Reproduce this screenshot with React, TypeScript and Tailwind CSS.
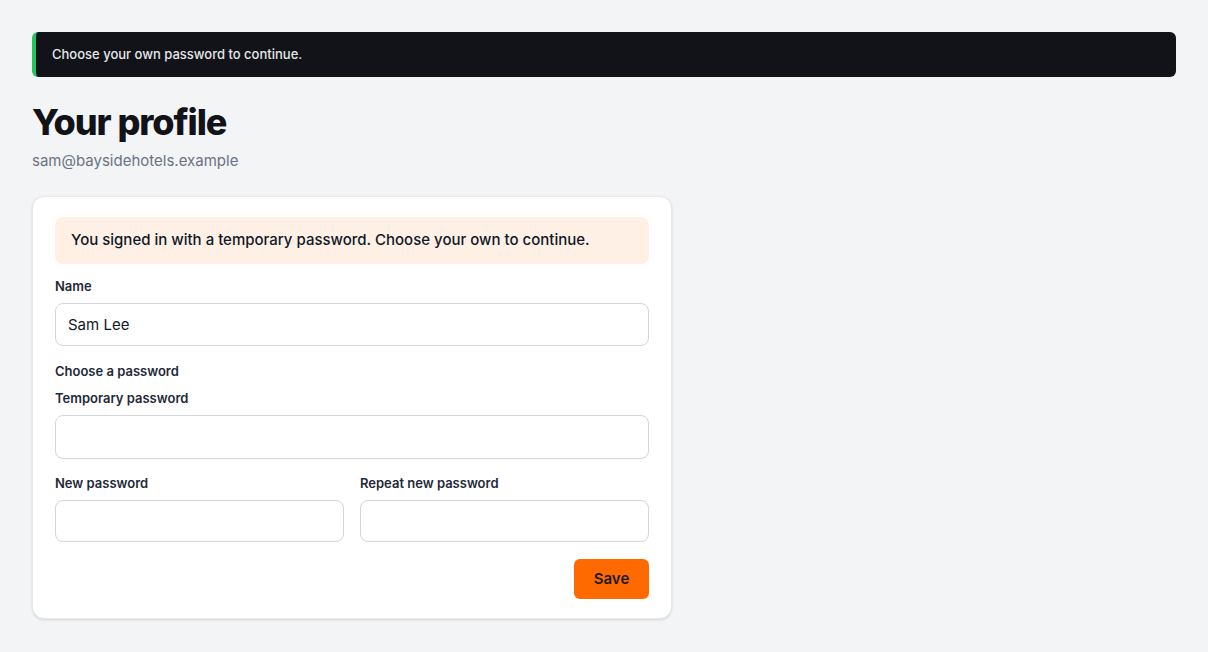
const App = () => {
  return (
    <div className="min-h-screen bg-[#f3f4f6] px-8 pt-8 pb-8 font-['Inter',sans-serif] text-gray-900">
      <div className="flex h-[45px] items-center rounded-md border-l-4 border-[#22c55e] bg-[#111318] pl-4 text-[13px] font-medium text-[#e5e7eb]">
        Choose your own password to continue.
      </div>

      <h1 className="mt-[25px] text-[36px] leading-[40px] font-extrabold tracking-[-0.03em] text-[#111318]">
        Your profile
      </h1>
      <p className="mt-2 text-[15px] leading-[22px] text-gray-500">sam@baysidehotels.example</p>

      <div className="mt-6 w-[640px] rounded-xl border border-gray-200 bg-white px-[22px] pt-5 pb-[19px] shadow-sm">
        <div className="flex h-[47px] items-center rounded-lg bg-[#fff0e6] px-4 text-[15px] font-medium text-gray-900">
          You signed in with a temporary password. Choose your own to continue.
        </div>

        <form className="mt-[13px] flex flex-col" onSubmit={(e) => e.preventDefault()}>
          <label className="mb-2 block text-[13px] leading-[18px] font-semibold text-gray-800">Name</label>
          <input
            type="text"
            defaultValue="Sam Lee"
            className="h-[43px] w-full rounded-lg border border-gray-300 px-3 text-[15px] text-gray-900 outline-none"
          />

          <div className="mt-4 text-[13px] leading-[18px] font-semibold text-gray-800">Choose a password</div>
          <label className="mt-[9px] mb-2 block text-[13px] leading-[18px] font-semibold text-gray-800">
            Temporary password
          </label>
          <input
            type="password"
            className="h-[44px] w-full rounded-lg border border-gray-300 px-3 text-[15px] outline-none"
          />

          <div className="mt-[15px] grid grid-cols-2 gap-4">
            <div>
              <label className="mb-2 block text-[13px] leading-[18px] font-semibold text-gray-800">New password</label>
              <input
                type="password"
                className="h-[42px] w-full rounded-lg border border-gray-300 px-3 text-[15px] outline-none"
              />
            </div>
            <div>
              <label className="mb-2 block text-[13px] leading-[18px] font-semibold text-gray-800">
                Repeat new password
              </label>
              <input
                type="password"
                className="h-[42px] w-full rounded-lg border border-gray-300 px-3 text-[15px] outline-none"
              />
            </div>
          </div>

          <div className="mt-[17px] flex justify-end">
            <button
              type="submit"
              className="h-10 w-[75px] rounded-md bg-[#ff6a00] text-[15px] font-semibold text-[#1a1a1a]"
            >
              Save
            </button>
          </div>
        </form>
      </div>
    </div>
  );
};

export default App;
